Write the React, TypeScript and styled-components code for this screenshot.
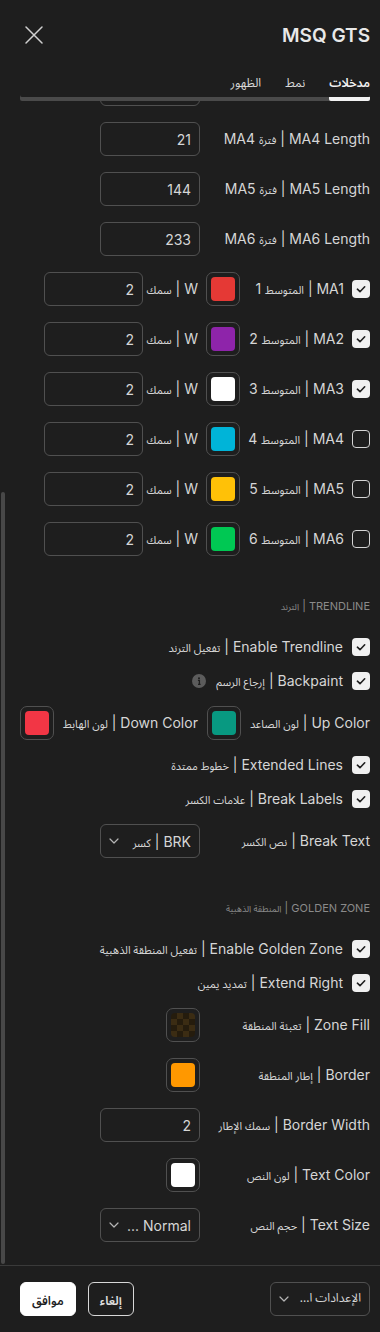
import React from "react";
import styled, { createGlobalStyle, css } from "styled-components";

const GlobalStyle = createGlobalStyle`
  html, body {
    margin: 0;
    padding: 0;
    background: #1e1e1e;
  }
  body {
    font-family: Inter, "Noto Sans", "DejaVu Sans", sans-serif;
    color: #d6d6d6;
  }
  * {
    box-sizing: border-box;
  }
`;

const Dialog = styled.div`
  width: 380px;
  height: 1332px;
  display: flex;
  flex-direction: column;
  background: #1e1e1e;
  overflow: hidden;
`;

const Header = styled.div`
  height: 70px;
  flex: none;
  display: flex;
  align-items: center;
  justify-content: space-between;
  padding: 0 10px 0 24px;
`;

const Title = styled.div`
  font-size: 19px;
  font-weight: 600;
  color: #e8e8e8;
`;

const CloseButton = styled.button`
  width: 20px;
  height: 20px;
  padding: 0;
  border: 0;
  background: none;
  display: flex;
  cursor: pointer;
`;

// arabic glyphs come from a wide fallback face, so they get their own size
const Ar = styled.span<{ $size?: number }>`
  font-family: "Noto Sans Arabic", "Noto Naskh Arabic", "DejaVu Sans", sans-serif;
  font-size: ${({ $size }) => $size ?? 11}px;
  font-weight: inherit;
  line-height: 1;
`;

const TabsWrap = styled.div`
  flex: none;
  height: 31px;
  margin: 0 10px 0 20px;
  display: flex;
  gap: 24px;
  border-radius: 2px;
  box-shadow: inset 0 -4px 0 #4a4a4a;
`;

const Tab = styled.div<{ $active?: boolean }>`
  height: 31px;
  padding: 1px 0 6px;
  line-height: 20px;
  border-bottom: 4px solid ${({ $active }) => ($active ? "#f2f2f2" : "transparent")};
  border-radius: 2px;
  font-weight: ${({ $active }) => ($active ? 600 : 400)};
  color: ${({ $active }) => ($active ? "#f2f2f2" : "#d8d8d8")};
`;

const Body = styled.div`
  flex: 1;
  position: relative;
  overflow: hidden;
`;

const Content = styled.div`
  margin-top: -29px;
  padding: 0 10px 0 20px;
  display: flex;
  flex-direction: column;
  gap: 16px;
`;

const ScrollThumb = styled.div`
  position: absolute;
  left: 1px;
  top: 391px;
  bottom: 1px;
  width: 4px;
  border-radius: 2px;
  background: #484848;
`;

const FieldRow = styled.div`
  display: grid;
  grid-template-columns: 170px 1fr;
  align-items: center;
  height: 34px;
`;

const Label = styled.span`
  font-size: 14px;
  line-height: 18px;
  color: #d6d6d6;
  white-space: nowrap;
`;

const MaLabel = styled(Label)`
  width: 88px;
  margin-left: 8px;
`;

const WLabel = styled(Label)`
  width: 47px;
`;

const boxBase = css`
  height: 34px;
  border: 1px solid #505050;
  border-radius: 6px;
  background: transparent;
`;

const NumberInput = styled.input<{ $width?: number }>`
  ${boxBase};
  width: ${({ $width }) => $width ?? 100}px;
  padding: 0 8px;
  font: inherit;
  font-size: 14px;
  color: #d6d6d6;
  text-align: right;
  outline: none;
`;

const Select = styled.div<{ $width?: number }>`
  ${boxBase};
  width: ${({ $width }) => $width ?? 100}px;
  padding: 0 8px;
  display: flex;
  align-items: center;
  justify-content: space-between;
  font-size: 14px;
  color: #d6d6d6;
  white-space: nowrap;
`;

const SwatchBox = styled.div`
  width: 34px;
  height: 34px;
  flex: none;
  border: 1px solid #505050;
  border-radius: 7px;
  display: flex;
  align-items: center;
  justify-content: center;
`;

const SwatchFill = styled.div<{ $color?: string; $checker?: boolean }>`
  width: 24px;
  height: 24px;
  border-radius: 4px;
  background: ${({ $color }) => $color ?? "transparent"};
  ${({ $checker }) =>
    $checker &&
    css`
      background: repeating-conic-gradient(#3b2c13 0 25%, #251c0d 0 50%) 0 0 / 12px 12px;
    `}
`;

const InlineRow = styled.div<{ $gap?: number }>`
  display: flex;
  align-items: center;
  gap: ${({ $gap }) => $gap ?? 8}px;
  height: 34px;
`;

const CheckRow = styled.div`
  display: flex;
  align-items: center;
  gap: 9px;
  height: 18px;
`;

const Box = styled.div<{ $checked?: boolean }>`
  width: 18px;
  height: 18px;
  flex: none;
  border-radius: 4px;
  display: flex;
  ${({ $checked }) =>
    $checked
      ? css`
          background: #f0f0f0;
        `
      : css`
          border: 1.5px solid #d4d4d4;
        `}
`;

const InfoDot = styled.span`
  width: 14px;
  height: 14px;
  margin-right: 1px;
  border-radius: 50%;
  background: #5c5c5c;
  display: flex;
  align-items: center;
  justify-content: center;
`;

const SectionTitle = styled.div`
  padding: 26px 0 8px;
  font-size: 11px;
  line-height: 16px;
  color: #8a8a8a;
`;

const Footer = styled.div`
  flex: none;
  height: 67px;
  border-top: 1px solid #3a3a3a;
  padding: 0 10px 0 20px;
  display: flex;
  align-items: center;
  justify-content: space-between;
`;

const ButtonGroup = styled.div`
  display: flex;
  gap: 12px;
`;

const Button = styled.button<{ $primary?: boolean }>`
  height: 34px;
  padding: 0 11px;
  border-radius: 6px;
  font: inherit;
  font-weight: 600;
  cursor: pointer;
  ${({ $primary }) =>
    $primary
      ? css`
          background: #ffffff;
          color: #1e1e1e;
          border: 1px solid #ffffff;
        `
      : css`
          background: transparent;
          color: #e0e0e0;
          border: 1px solid #d8d8d8;
        `}
`;

const Check = ({ checked }: { checked?: boolean }) => (
  <Box $checked={checked}>
    {checked && (
      <svg width="18" height="18" viewBox="0 0 18 18" fill="none">
        <path d="M5.4 9.2 8 11.7l4.7-4.9" stroke="#1e1e1e" strokeWidth="1.6" strokeLinecap="round" strokeLinejoin="round" />
      </svg>
    )}
  </Box>
);

const Swatch = ({ color, checker }: { color?: string; checker?: boolean }) => (
  <SwatchBox>
    <SwatchFill $color={color} $checker={checker} />
  </SwatchBox>
);

const Chevron = () => (
  <svg width="10" height="6" viewBox="0 0 10 6" fill="none">
    <path d="M1 1l4 4 4-4" stroke="#b5b5b5" strokeWidth="1.2" strokeLinecap="round" strokeLinejoin="round" />
  </svg>
);

const Info = () => (
  <InfoDot>
    <svg width="14" height="14" viewBox="0 0 14 14" fill="none">
      <circle cx="7" cy="4.2" r="1" fill="#1e1e1e" />
      <path d="M5.9 6.3H7.4V10.4M6 10.4h2.6" stroke="#1e1e1e" strokeWidth="1.3" />
    </svg>
  </InfoDot>
);

// "English | عربي" label
const Bi = ({ en, ar }: { en: string; ar: string }) => (
  <Label>
    {`${en} | `}
    <Ar>{ar}</Ar>
  </Label>
);

const lengths = [
  { id: "MA4", value: "21" },
  { id: "MA5", value: "144" },
  { id: "MA6", value: "233" },
];

const averages = [
  { n: 1, color: "#e53935", on: true },
  { n: 2, color: "#8e24aa", on: true },
  { n: 3, color: "#ffffff", on: true },
  { n: 4, color: "#00b4d8", on: false },
  { n: 5, color: "#ffc107", on: false },
  { n: 6, color: "#00c853", on: false },
];

const App = () => {
  return (
    <Dialog dir="rtl">
      <GlobalStyle />
      <Header>
        <Title dir="ltr">MSQ GTS</Title>
        <CloseButton aria-label="close">
          <svg width="20" height="20" viewBox="0 0 20 20" fill="none">
            <path d="M2 2l16 16M18 2 2 18" stroke="#d0d0d0" strokeWidth="1.5" strokeLinecap="round" />
          </svg>
        </CloseButton>
      </Header>

      <TabsWrap>
        <Tab $active>
          <Ar $size={12}>مدخلات</Ar>
        </Tab>
        <Tab>
          <Ar $size={12}>نمط</Ar>
        </Tab>
        <Tab>
          <Ar $size={12}>الظهور</Ar>
        </Tab>
      </TabsWrap>

      <Body>
        <Content>
          {/* row scrolled up under the tabs, only its input edge shows */}
          <FieldRow aria-hidden>
            <span />
            <NumberInput readOnly tabIndex={-1} />
          </FieldRow>

          {lengths.map((l) => (
            <FieldRow key={l.id}>
              <Label>
                {`${l.id} Length | `}
                <Ar>فترة</Ar>
                {` ${l.id}`}
              </Label>
              <NumberInput defaultValue={l.value} />
            </FieldRow>
          ))}

          {averages.map((a) => (
            <InlineRow key={a.n}>
              <Check checked={a.on} />
              <MaLabel>
                {`MA${a.n} | `}
                <Ar>المتوسط</Ar>
                {` ${a.n}`}
              </MaLabel>
              <Swatch color={a.color} />
              <WLabel>
                {"W | "}
                <Ar>سمك</Ar>
              </WLabel>
              <NumberInput $width={99} defaultValue="2" />
            </InlineRow>
          ))}

          <SectionTitle>
            {"TRENDLINE | "}
            <Ar $size={9}>الترند</Ar>
          </SectionTitle>
          <CheckRow>
            <Check checked />
            <Bi en="Enable Trendline" ar="تفعيل الترند" />
          </CheckRow>
          <CheckRow>
            <Check checked />
            <Bi en="Backpaint" ar="إرجاع الرسم" />
            <Info />
          </CheckRow>
          <InlineRow $gap={9}>
            <Bi en="Up Color" ar="لون الصاعد" />
            <Swatch color="#089981" />
            <Bi en="Down Color" ar="لون الهابط" />
            <Swatch color="#f23645" />
          </InlineRow>
          <CheckRow>
            <Check checked />
            <Bi en="Extended Lines" ar="خطوط ممتدة" />
          </CheckRow>
          <CheckRow>
            <Check checked />
            <Bi en="Break Labels" ar="علامات الكسر" />
          </CheckRow>
          <FieldRow>
            <Bi en="Break Text" ar="نص الكسر" />
            <Select>
              <span>
                {"BRK | "}
                <Ar>كسر</Ar>
              </span>
              <Chevron />
            </Select>
          </FieldRow>

          <SectionTitle>
            {"GOLDEN ZONE | "}
            <Ar $size={9}>المنطقة الذهبية</Ar>
          </SectionTitle>
          <CheckRow>
            <Check checked />
            <Bi en="Enable Golden Zone" ar="تفعيل المنطقة الذهبية" />
          </CheckRow>
          <CheckRow>
            <Check checked />
            <Bi en="Extend Right" ar="تمديد يمين" />
          </CheckRow>
          <FieldRow>
            <Bi en="Zone Fill" ar="تعبئة المنطقة" />
            <Swatch checker />
          </FieldRow>
          <FieldRow>
            <Bi en="Border" ar="إطار المنطقة" />
            <Swatch color="#ff9800" />
          </FieldRow>
          <FieldRow>
            <Bi en="Border Width" ar="سمك الإطار" />
            <NumberInput defaultValue="2" />
          </FieldRow>
          <FieldRow>
            <Bi en="Text Color" ar="لون النص" />
            <Swatch color="#ffffff" />
          </FieldRow>
          <FieldRow>
            <Bi en="Text Size" ar="حجم النص" />
            <Select>
              <span>Normal ...</span>
              <Chevron />
            </Select>
          </FieldRow>
        </Content>
        <ScrollThumb />
      </Body>

      <Footer>
        <Select>
          <Ar $size={12}>الإعدادات ا...</Ar>
          <Chevron />
        </Select>
        <ButtonGroup>
          <Button>
            <Ar $size={12}>إلغاء</Ar>
          </Button>
          <Button $primary>
            <Ar $size={12}>موافق</Ar>
          </Button>
        </ButtonGroup>
      </Footer>
    </Dialog>
  );
};

export default App;
